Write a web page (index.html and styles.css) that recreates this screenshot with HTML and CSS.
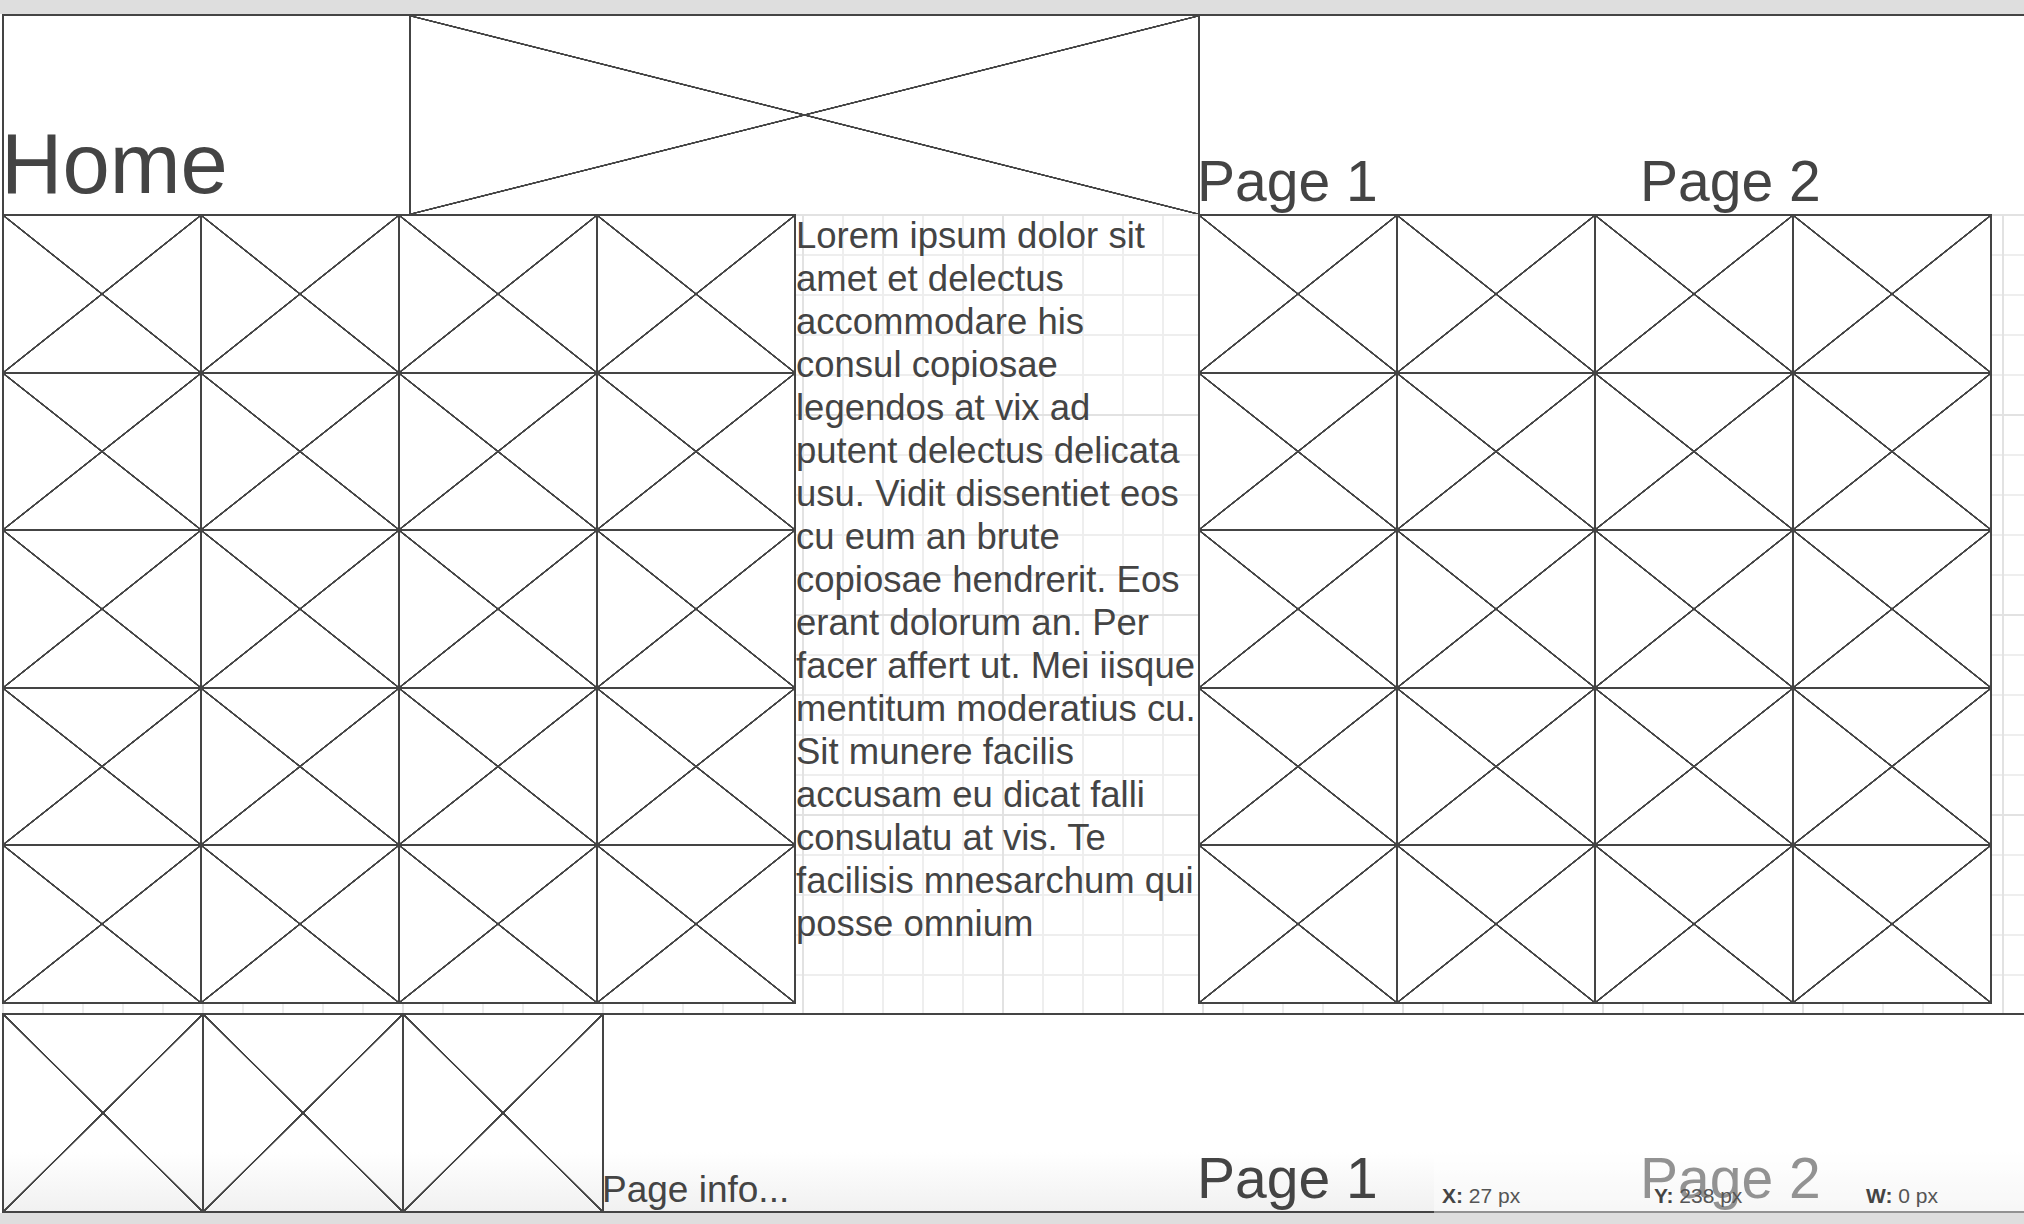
FILE: index.html
```html
<!DOCTYPE html>
<html lang="en">
<head>
    <meta charset="UTF-8">
    <title>Wireframe</title>
    <link rel="stylesheet" href="styles.css">
</head>
<body>
<div class="app">
    <div class="topbar"></div>

    <div class="canvas">
        <!-- шапка -->
        <header class="page-header">
            <div class="logo"><span>Home</span></div>
            <div class="banner"></div>
            <nav class="nav">
                <a class="nav-link">Page 1</a>
                <a class="nav-link">Page 2</a>
            </nav>
        </header>

        <main class="content">
            <div class="thumbs">
                <div class="ph"></div><div class="ph"></div><div class="ph"></div><div class="ph"></div>
                <div class="ph"></div><div class="ph"></div><div class="ph"></div><div class="ph"></div>
                <div class="ph"></div><div class="ph"></div><div class="ph"></div><div class="ph"></div>
                <div class="ph"></div><div class="ph"></div><div class="ph"></div><div class="ph"></div>
                <div class="ph"></div><div class="ph"></div><div class="ph"></div><div class="ph"></div>
            </div>
            <p class="lorem">Lorem ipsum dolor sit amet et delectus accommodare his consul copiosae legendos at vix ad putent delectus delicata usu. Vidit dissentiet eos cu eum an brute copiosae hendrerit. Eos erant dolorum an. Per facer affert ut. Mei iisque mentitum moderatius cu. Sit munere facilis accusam eu dicat falli consulatu at vis. Te facilisis mnesarchum qui posse omnium</p>
            <div class="thumbs">
                <div class="ph"></div><div class="ph"></div><div class="ph"></div><div class="ph"></div>
                <div class="ph"></div><div class="ph"></div><div class="ph"></div><div class="ph"></div>
                <div class="ph"></div><div class="ph"></div><div class="ph"></div><div class="ph"></div>
                <div class="ph"></div><div class="ph"></div><div class="ph"></div><div class="ph"></div>
                <div class="ph"></div><div class="ph"></div><div class="ph"></div><div class="ph"></div>
            </div>
        </main>

        <footer class="page-footer">
            <div class="foot-thumbs">
                <div class="ph ph-foot"></div>
                <div class="ph ph-foot"></div>
                <div class="ph ph-foot"></div>
            </div>
            <div class="page-info">Page info...</div>
            <nav class="nav nav-foot">
                <a class="nav-link">Page 1</a>
                <a class="nav-link">Page 2</a>
            </nav>
        </footer>
    </div>

    <div class="bottombar"></div>

    <!-- строка состояния поверх холста -->
    <div class="status">
        <div class="stat"><b>X:</b> 27 px</div>
        <div class="stat"><b>Y:</b> 238 px</div>
        <div class="stat"><b>W:</b> 0 px</div>
    </div>
</div>
</body>
</html>
```

FILE: styles.css
```css
body {
    margin: 0;
    background: #dedede;
    font-family: "Liberation Sans", Arial, sans-serif;
    color: #444;
    overflow: hidden;
}
.app {
    position: relative;
    width: 2024px;
    height: 1224px;
}
.topbar {
    height: 14px;
    background: #dedede;
}
.canvas {
    background: #fff;
    padding-left: 2px;
}

/* X-заглушка картинки */
.ph,
.banner {
    box-sizing: border-box;
    flex-shrink: 0;
    background-color: #fff;
    background-image:
        linear-gradient(to top right, transparent calc(50% - 1.1px), #444 calc(50% - 0.7px), #444 calc(50% + 0.7px), transparent calc(50% + 1.1px)),
        linear-gradient(to bottom right, transparent calc(50% - 1.1px), #444 calc(50% - 0.7px), #444 calc(50% + 0.7px), transparent calc(50% + 1.1px));
    background-repeat: no-repeat;
}

.page-header {
    display: flex;
    height: 198px;
    border-top: 2px solid #444;
    border-bottom: 2px solid #444;
    border-left: 2px solid #444;
    background: #fff;
}
.logo {
    width: 405px;
    flex-shrink: 0;
    display: flex;
    align-items: flex-end;
    font-size: 85px;
    padding-bottom: 1px;
}
.logo span {
    margin-left: -3px;
}
.banner {
    width: 791px;
    border-left: 2px solid #444;
    border-right: 2px solid #444;
}
.nav {
    display: flex;
    flex-shrink: 0;
    align-items: flex-end;
    margin-left: -3px;
}
.nav-foot {
    margin-left: -1px;
}
.nav-link {
    width: 443px;
    flex-shrink: 0;
    font-size: 57px;
    color: #444;
}
.nav-link + .nav-link {
    width: auto;
}

.content {
    display: flex;
    height: 799px;
    margin-top: -2px;
    background-color: #fff;
    background-image:
        linear-gradient(90deg, #e2e2e2 2px, transparent 2px),
        linear-gradient(#e2e2e2 2px, transparent 2px),
        linear-gradient(90deg, #eeeeee 2px, transparent 2px),
        linear-gradient(#eeeeee 2px, transparent 2px);
    background-size: 200px 200px, 200px 200px, 40px 40px, 40px 40px;
}
.thumbs {
    display: grid;
    flex-shrink: 0;
    grid-template-columns: repeat(4, 198px);
    grid-template-rows: repeat(5, 157.6px);
    border-left: 2px solid #444;
    border-top: 2px solid #444;
    align-self: flex-start;
}
.thumbs .ph {
    border-right: 2px solid #444;
    border-bottom: 2px solid #444;
}
.lorem {
    width: 402px;
    flex-shrink: 0;
    margin: 0;
    font-size: 36.5px;
    line-height: 43px;
}

.page-footer {
    display: flex;
    height: 196px;
    border-top: 2px solid #444;
    border-bottom: 2px solid #444;
    border-left: 2px solid #444;
    background: linear-gradient(#fff 70%, #f1f1f1);
}
.foot-thumbs {
    display: flex;
    flex-shrink: 0;
}
.ph-foot {
    width: 200px;
    border-right: 2px solid #444;
    background-color: transparent;
}
.page-info {
    width: 596px;
    flex-shrink: 0;
    margin-left: -2px;
    align-self: flex-end;
    font-size: 37px;
}

.bottombar {
    height: 11px;
    background: #dedede;
}

.status {
    position: absolute;
    left: 1434px;
    top: 1150px;
    width: 590px;
    height: 63px;
    box-sizing: border-box;
    padding: 0 0 5px 8px;
    display: flex;
    align-items: flex-end;
    overflow: hidden;
    background: rgba(255, 255, 255, 0.42);
}
.stat {
    width: 212px;
    flex-shrink: 0;
    font-size: 21px;
    color: #555;
}
.stat b {
    color: #444;
}
```
